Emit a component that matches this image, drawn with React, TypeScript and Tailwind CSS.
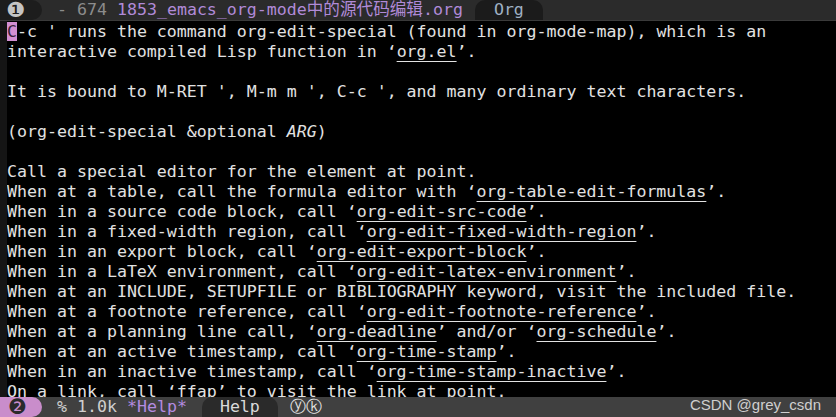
import React from 'react'

const mono = { fontFamily: '"DejaVu Sans Mono","Noto Sans CJK SC",monospace' }

type Seg = string | { t: string; link?: boolean; it?: boolean }

const lines: Seg[][] = [
  [],
  ["interactive compiled Lisp function in ‘", { t: 'org.el', link: true }, "’."],
  [""],
  ["It is bound to M-RET ', M-m m ', C-c ', and many ordinary text characters."],
  [""],
  ["(org-edit-special &optional ", { t: 'ARG', it: true }, ")"],
  [""],
  ["Call a special editor for the element at point."],
  ["When at a table, call the formula editor with ‘", { t: 'org-table-edit-formulas', link: true }, "’."],
  ["When in a source code block, call ‘", { t: 'org-edit-src-code', link: true }, "’."],
  ["When in a fixed-width region, call ‘", { t: 'org-edit-fixed-width-region', link: true }, "’."],
  ["When in an export block, call ‘", { t: 'org-edit-export-block', link: true }, "’."],
  ["When in a LaTeX environment, call ‘", { t: 'org-edit-latex-environment', link: true }, "’."],
  ["When at an INCLUDE, SETUPFILE or BIBLIOGRAPHY keyword, visit the included file."],
  ["When at a footnote reference, call ‘", { t: 'org-edit-footnote-reference', link: true }, "’."],
  ["When at a planning line call, ‘", { t: 'org-deadline', link: true }, "’ and/or ‘", { t: 'org-schedule', link: true }, "’."],
  ["When at an active timestamp, call ‘", { t: 'org-time-stamp', link: true }, "’."],
  ["When in an inactive timestamp, call ‘", { t: 'org-time-stamp-inactive', link: true }, "’."],
  ["On a link, call ‘ffap’ to visit the link at point."],
]

function Line({ segs }: { segs: Seg[] }) {
  return (
    <div className="h-[20px] leading-[20px] whitespace-pre">
      {segs.map((s, i) =>
        typeof s === 'string' ? (
          <span key={i}>{s}</span>
        ) : (
          <span
            key={i}
            className={s.link ? 'underline underline-offset-[4px] decoration-[1px]' : s.it ? 'italic' : ''}
          >
            {s.t}
          </span>
        )
      )}
    </div>
  )
}

export default function App() {
  return (
    <div className="w-[836px] h-[417px] bg-black flex flex-col overflow-hidden relative text-[16.6px]" style={mono}>
      {/* header line */}
      <div className="h-[21px] shrink-0 flex items-center bg-[#2b2b2b] border-b border-[#3a3a3a] leading-[20px]">
        <div className="w-[42px] h-full bg-[#1d1d1d] rounded-r-[10px] flex items-center pl-[6px]">
          <span className="text-[#c4c4c4] text-[21px] leading-none" style={{ fontFamily: '"DejaVu Sans",sans-serif' }}>❶</span>
        </div>
        <div className="pl-[15px] whitespace-pre text-[#8c8c8c]">- 674 </div>
        <div className="whitespace-pre text-[#b08ad8]">1853_emacs_org-mode中的源代码编辑.org</div>
        <div className="ml-[12px] h-full bg-[#1b1b1b] rounded-t-[10px] px-[19px] flex items-center text-[#9fb0c4]">Org</div>
      </div>

      {/* buffer */}
      <div className="flex-1 flex min-h-0 text-[#e2e2e2]">
        <div className="w-[7px] bg-[#151515] shrink-0" />
        <div className="flex-1 overflow-hidden pt-[1px]">
          <div className="h-[20px] leading-[20px] whitespace-pre">
            <span className="bg-[#d28fd2] text-[#3a1f3a]">C</span>
            <span>-c ' runs the command org-edit-special (found in org-mode-map), which is an</span>
          </div>
          {lines.slice(1).map((l, i) => (
            <Line key={i} segs={l} />
          ))}
        </div>
      </div>

      {/* mode line */}
      <div className="h-[20px] shrink-0 flex items-center bg-[#404040] relative z-10 leading-[20px]">
        <div className="w-[42px] h-full bg-[#c98dcb] rounded-r-[10px] flex items-center pl-[8px]">
          <span className="text-[#2a2a2a] text-[21px] leading-none" style={{ fontFamily: '"DejaVu Sans",sans-serif' }}>❷</span>
        </div>
        <div className="pl-[15px] whitespace-pre text-[#cfcfcf]">% 1.0k </div>
        <div className="whitespace-pre text-[#b38be0]">*Help*</div>
        <div className="ml-[15px] h-full bg-[#2a2a2a] rounded-t-[10px] px-[18px] flex items-center text-[#dadada]">Help</div>
        <div className="ml-[12px] text-[16px] text-[#e8e8e8]" style={{ fontFamily: '"DejaVu Sans",sans-serif' }}>ⓨⓚ</div>
        <div className="absolute right-[15px] top-0 leading-[16px] text-[15px] text-[#cfcfcf]" style={{ fontFamily: '"Liberation Sans",Arial,sans-serif' }}>
          CSDN @grey_csdn
        </div>
      </div>
    </div>
  )
}
